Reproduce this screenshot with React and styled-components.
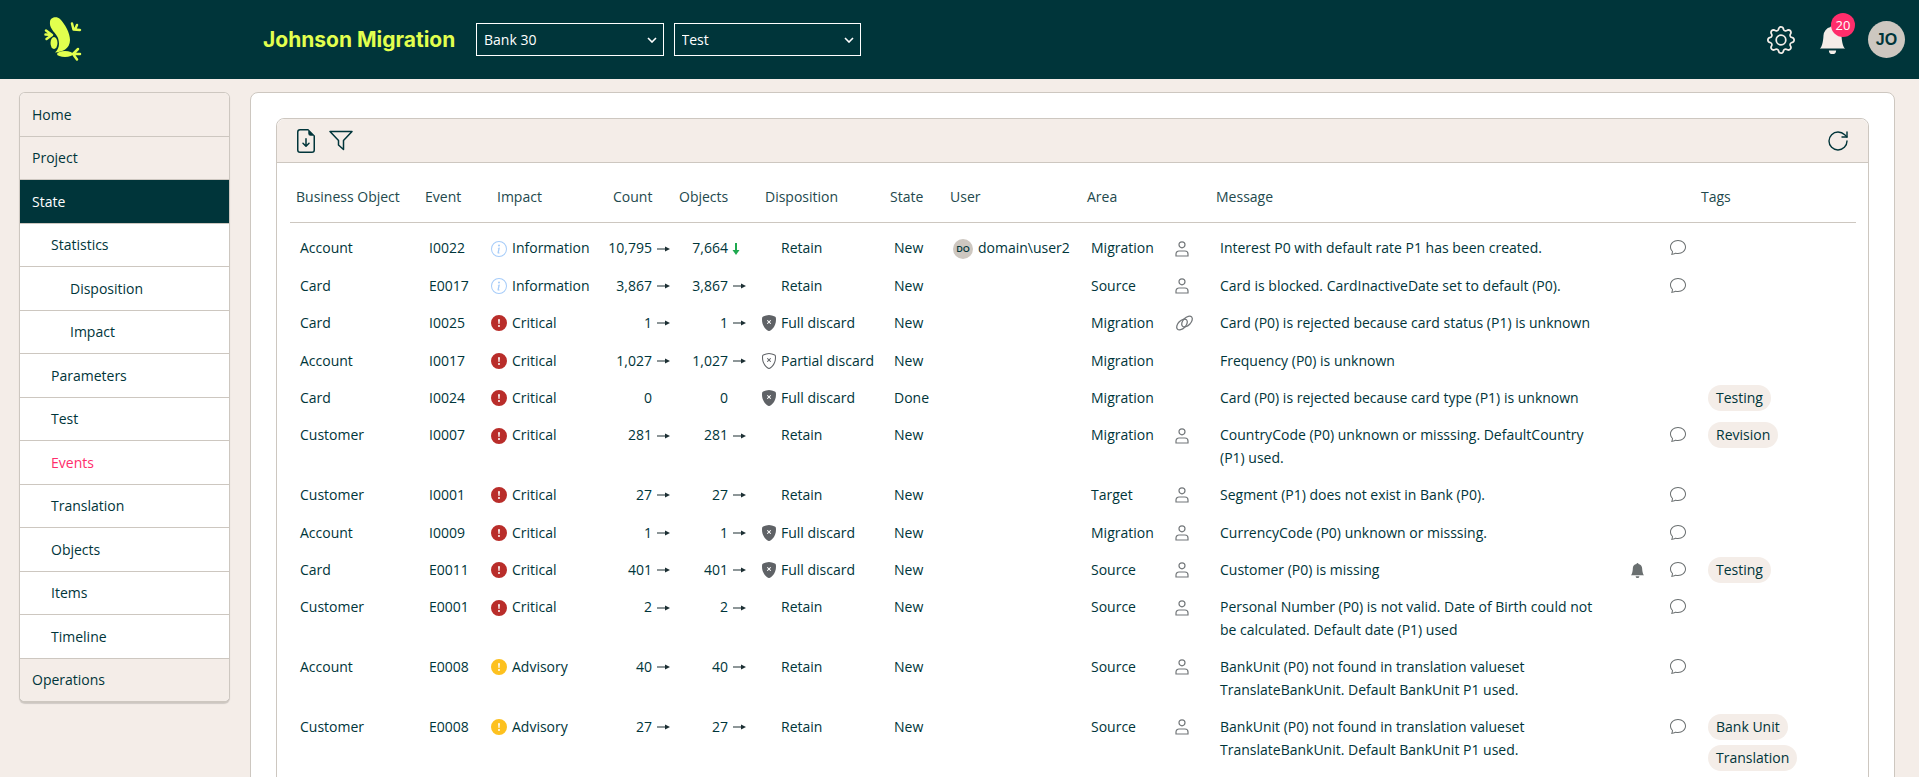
import React from "react";
import styled, { createGlobalStyle } from "styled-components";
import {
  BsGear, BsBellFill, BsFileEarmarkArrowDown, BsInfoCircle,
  BsExclamationCircleFill, BsShieldFillX, BsShieldX, BsChat,
} from "react-icons/bs";
import { RotateCw } from "lucide-react";

const dark = "#00353a";
const sand = "#f4ede8";
const line = "#cdc7c0";
const pink = "#ff2d6b";

const GlobalStyle = createGlobalStyle`
html, body { margin:0; padding:0; height:100%; overflow:hidden; background:${sand}; }
body { font-family:"Open Sans","Noto Sans","Liberation Sans",sans-serif; font-size:14px; color:${dark}; }
* { box-sizing:border-box; }
`;

const Page = styled.div`
height:100vh;
display:flex;
flex-direction:column;
overflow:hidden;
`;
const TopBar = styled.header`
flex:none;
height:79px;
background:${dark};
display:flex;
align-items:center;
padding:0 14px 0 44px;
`;
const LogoBox = styled.div`
width:219px;
display:flex;
`;
const AppTitle = styled.div`
width:213px;
font-family:Inter,sans-serif;
font-weight:700;
font-size:21px;
color:#e2ff4e;
`;
const PickerWrap = styled.div`
position:relative;
width:187.5px;
height:33px;
margin-right:10px;
& > svg {
  position:absolute;
  right:7px;
  top:14px;
  pointer-events:none;
}
`;
const Picker = styled.select`
appearance:none;
width:100%;
height:100%;
padding:0 20px 0 7px;
background:${dark};
color:#fff;
border:1px solid #fff;
border-radius:0;
font:inherit;
font-size:14px;
`;
const TopIcons = styled.div`
margin-left:auto;
display:flex;
align-items:center;
color:${sand};
`;
const GearBtn = styled.div`
display:flex;
font-size:28px;
margin-right:23px;
`;
const BellBtn = styled.div`
position:relative;
display:flex;
font-size:29px;
margin-right:21px;
`;
const Badge = styled.span`
position:absolute;
left:13px;
top:-12px;
width:24px;
height:24px;
border-radius:50%;
background:${pink};
color:#fff;
font-size:13px;
line-height:24px;
text-align:center;
`;
const Avatar = styled.div`
width:37px;
height:37px;
border-radius:50%;
background:${line};
color:${dark};
font-family:"Liberation Sans",sans-serif;
font-weight:700;
font-size:16px;
display:flex;
align-items:center;
justify-content:center;
`;
const Body = styled.div`
flex:1;
min-height:0;
display:flex;
align-items:flex-start;
gap:20px;
padding:13px 24px 0 19px;
`;
const SideNav = styled.nav`
flex:none;
width:211px;
border:1px solid ${line};
border-bottom-width:2px;
border-radius:6px;
overflow:hidden;
box-shadow:0 1px 1px rgba(0,0,0,.15);
background:#fff;
`;
const NavItem = styled.div`
height:43.5px;
display:flex;
align-items:center;
padding-left:${p => 12 + p.$level * 19}px;
background:${p => p.$active ? dark : p.$level === 0 ? sand : "#fff"};
color:${p => p.$active ? "#fff" : p.$current ? pink : dark};
border-bottom:1px solid ${line};
&:last-child { border-bottom:none; height:42.5px; }
`;
const MainCard = styled.main`
flex:1;
min-width:0;
height:800px;
background:#fff;
border:1px solid ${line};
border-radius:8px;
padding:25px 25px 0 25px;
`;
const ListCard = styled.section`
border:1px solid ${line};
border-radius:8px;
padding:0 12px 20px 13px;
`;
const Toolbar = styled.div`
height:44px;
margin:0 -12px 0 -13px;
padding:0 18px 0 17px;
background:${sand};
border-bottom:1px solid ${line};
border-radius:8px 8px 0 0;
display:flex;
align-items:center;
gap:11px;
font-size:24px;
color:${dark};
& > svg:last-child { margin-left:auto; }
`;
const Table = styled.table`
width:1566px;
table-layout:fixed;
border-collapse:collapse;
line-height:22.4px;
`;
const Th = styled.th`
padding:23px 6px 14px;
text-align:left;
font-weight:400;
color:#23494d;
border-bottom:1px solid ${line};
`;
const Row = styled.tr`
&:first-child td { padding-top:14px; }
`;
const Td = styled.td`
padding:7.5px 10px;
vertical-align:top;
`;
const FlushTd = styled(Td)`
padding-left:0;
padding-right:0;
`;
const MessageTd = styled(Td)`
padding-right:22px;
`;
const IconText = styled.div`
display:flex;
align-items:center;
gap:5px;
height:22.4px;
white-space:nowrap;
`;
const ImpactMark = styled.span`
display:flex;
font-size:16px;
color:${p => p.$color};
`;
const CountCell = styled.div`
display:flex;
justify-content:flex-end;
align-items:center;
height:22.4px;
padding-right:${p => p.$right}px;
`;
const ArrowSlot = styled.span`
width:18px;
display:flex;
justify-content:${p => p.$down ? "flex-start" : "flex-end"};
padding-left:${p => p.$down ? 4 : 0}px;
`;
const DispCell = styled.div`
display:flex;
align-items:center;
white-space:nowrap;
height:22.4px;
padding-left:2px;
`;
const ShieldSlot = styled.span`
width:20px;
display:flex;
font-size:16px;
color:#5f6266;
`;
const UserCell = styled.div`
display:flex;
align-items:center;
gap:5px;
white-space:nowrap;
margin-left:-1px;
height:22.4px;
`;
const UserDot = styled.span`
width:20px;
height:20px;
border-radius:50%;
background:${line};
color:${dark};
font-size:9px;
font-weight:600;
line-height:20px;
text-align:center;
`;
const GreyIcon = styled.span`
display:flex;
align-items:center;
height:${p => p.$tall || 22.4}px;
padding-left:${p => p.$left || 0}px;
font-size:${p => p.$size || 16}px;
color:#6a6f70;
`;
const Tag = styled.span`
display:block;
width:fit-content;
height:26px;
line-height:26px;
padding:0 8px;
margin:0 0 5px 3px;
border-radius:13px;
background:${sand};
white-space:nowrap;
`;
const TagList = styled.div`
margin-top:-2px;
margin-bottom:-7px;
`;

const navItems = [
  ["Home", 0], ["Project", 0], ["State", 0, "active"], ["Statistics", 1], ["Disposition", 2], ["Impact", 2],
  ["Parameters", 1], ["Test", 1], ["Events", 1, "current"], ["Translation", 1], ["Objects", 1], ["Items", 1],
  ["Timeline", 1], ["Operations", 0],
];

const columns = [129, 72, 116, 66, 86, 125, 60, 137, 89, 40, 420, 40, 25, 161];

const impacts = {
  Information: { Icon: BsInfoCircle, color: "#a6ccf9" },
  Critical: { Icon: BsExclamationCircleFill, color: "#b92d2a" },
  Advisory: { Icon: BsExclamationCircleFill, color: "#fdc11f" },
};

const rows = [
  { obj: "Account", ev: "I0022", imp: "Information", count: "10,795", objects: "7,664", down: true, disp: "Retain", state: "New", user: "domain\\user2", area: "Migration", who: "person", msg: "Interest P0 with default rate P1 has been created.", chat: true },
  { obj: "Card", ev: "E0017", imp: "Information", count: "3,867", objects: "3,867", disp: "Retain", state: "New", area: "Source", who: "person", msg: "Card is blocked. CardInactiveDate set to default (P0).", chat: true },
  { obj: "Card", ev: "I0025", imp: "Critical", count: "1", objects: "1", disp: "Full discard", shield: "full", state: "New", area: "Migration", who: "link", msg: "Card (P0) is rejected because card status (P1) is unknown" },
  { obj: "Account", ev: "I0017", imp: "Critical", count: "1,027", objects: "1,027", disp: "Partial discard", shield: "partial", state: "New", area: "Migration", msg: "Frequency (P0) is unknown" },
  { obj: "Card", ev: "I0024", imp: "Critical", count: "0", objects: "0", noArrow: true, disp: "Full discard", shield: "full", state: "Done", area: "Migration", msg: "Card (P0) is rejected because card type (P1) is unknown", tags: ["Testing"] },
  { obj: "Customer", ev: "I0007", imp: "Critical", count: "281", objects: "281", disp: "Retain", state: "New", area: "Migration", who: "person", msg: "CountryCode (P0) unknown or misssing. DefaultCountry (P1) used.", chat: true, tags: ["Revision"] },
  { obj: "Customer", ev: "I0001", imp: "Critical", count: "27", objects: "27", disp: "Retain", state: "New", area: "Target", who: "person", msg: "Segment (P1) does not exist in Bank (P0).", chat: true },
  { obj: "Account", ev: "I0009", imp: "Critical", count: "1", objects: "1", disp: "Full discard", shield: "full", state: "New", area: "Migration", who: "person", msg: "CurrencyCode (P0) unknown or misssing.", chat: true },
  { obj: "Card", ev: "E0011", imp: "Critical", count: "401", objects: "401", disp: "Full discard", shield: "full", state: "New", area: "Source", who: "person", msg: "Customer (P0) is missing", bell: true, chat: true, tags: ["Testing"] },
  { obj: "Customer", ev: "E0001", imp: "Critical", count: "2", objects: "2", disp: "Retain", state: "New", area: "Source", who: "person", msg: "Personal Number (P0) is not valid. Date of Birth could not be calculated. Default date (P1) used", chat: true },
  { obj: "Account", ev: "E0008", imp: "Advisory", count: "40", objects: "40", disp: "Retain", state: "New", area: "Source", who: "person", msg: "BankUnit (P0) not found in translation valueset TranslateBankUnit. Default BankUnit P1 used.", chat: true },
  { obj: "Customer", ev: "E0008", imp: "Advisory", count: "27", objects: "27", disp: "Retain", state: "New", area: "Source", who: "person", msg: "BankUnit (P0) not found in translation valueset TranslateBankUnit. Default BankUnit P1 used.", chat: true, tags: ["Bank Unit", "Translation"] },
];

const Logo = () => (
  <svg width="38" height="45" viewBox="44 17 38 45" fill="#e2ff4e" stroke="#e2ff4e" strokeLinecap="round" strokeLinejoin="round">
    <path stroke="none" d="M50 22C50 17 57 16 60 19C65 24 70 33 70 40C70 49 62 52 55 52.500C59 49 60 44 58 38C56 33 49 29 50 22Z" />
    <ellipse stroke="none" cx="54" cy="43" rx="3.500" ry="6" />
    <ellipse stroke="none" cx="65" cy="54" rx="8" ry="3" />
    <path fill="none" strokeWidth="2.500" d="M72 23.500L73.500 29.500L80 30M77 25L75 29.500" />
    <path fill="none" strokeWidth="2.500" d="M46 30.500L52 35M45.500 34.500L52 35M46.500 39L52 35" />
    <path fill="none" strokeWidth="2.500" d="M73 54L78 49M73 54L80 54M73 54L77 59.500" />
  </svg>
);

const Chevron = () => (
  <svg width="10" height="6" viewBox="0 0 10 6" fill="none" stroke="#fff" strokeWidth="1.600">
    <path d="M1 1l4 4 4-4" />
  </svg>
);

const Funnel = () => (
  <svg width="24" height="21" viewBox="0 0 24 21" fill="none" stroke={dark} strokeWidth="1.500" strokeLinejoin="round">
    <path d="M1 1.500h22l-8.500 9v9l-5-4.500v-4.500z" />
  </svg>
);

const ArrowRight = () => (
  <svg width="13" height="6" viewBox="0 0 13 6" fill="#1c2f33">
    <rect x="0" y="2.500" width="9" height="1" />
    <path d="M8 0.500L13 3L8 5.500z" />
  </svg>
);

const ArrowDown = () => (
  <svg width="8" height="12" viewBox="0 0 8 12" fill="#1ea94f">
    <rect x="3" y="0" width="2" height="8" />
    <path d="M0.500 7H7.500L4 12z" />
  </svg>
);

const PersonIcon = () => (
  <svg width="14" height="16" viewBox="0 0 14 16" fill="none" stroke="#73777a" strokeWidth="1.200">
    <circle cx="7" cy="3.800" r="3" />
    <path d="M1 15h12v-2c0-2-1.500-3-3-3H4c-1.500 0-3 1-3 3z" />
  </svg>
);

const LinkIcon = () => (
  <svg width="19" height="16" viewBox="0 0 19 16" fill="none" stroke="#73777a" strokeWidth="1.300">
    <ellipse cx="7" cy="9.500" rx="6.500" ry="3.800" transform="rotate(-45 7 9.500)" />
    <ellipse cx="12" cy="6.500" rx="6.500" ry="3.800" transform="rotate(-45 12 6.500)" />
  </svg>
);

const App = () => {
  return (
    <Page>
      <GlobalStyle />
      <TopBar>
        <LogoBox><Logo /></LogoBox>
        <AppTitle>Johnson Migration</AppTitle>
        <PickerWrap>
          <Picker defaultValue="Bank 30"><option>Bank 30</option></Picker>
          <Chevron />
        </PickerWrap>
        <PickerWrap>
          <Picker defaultValue="Test"><option>Test</option></Picker>
          <Chevron />
        </PickerWrap>
        <TopIcons>
          <GearBtn><BsGear /></GearBtn>
          <BellBtn><BsBellFill /><Badge>20</Badge></BellBtn>
          <Avatar>JO</Avatar>
        </TopIcons>
      </TopBar>
      <Body>
        <SideNav>
          {navItems.map(([label, level, flag]) => (
            <NavItem key={label} $level={level} $active={flag === "active"} $current={flag === "current"}>{label}</NavItem>
          ))}
        </SideNav>
        <MainCard>
          <ListCard>
            <Toolbar>
              <BsFileEarmarkArrowDown />
              <Funnel />
              <RotateCw size={24} strokeWidth={1.400} />
            </Toolbar>
            <Table>
              <colgroup>
                {columns.map((w, i) => <col key={i} style={{ width: w }} />)}
              </colgroup>
              <thead>
                <tr>
                  <Th>Business Object</Th>
                  <Th>Event</Th>
                  <Th>Impact</Th>
                  <Th>Count</Th>
                  <Th>Objects</Th>
                  <Th>Disposition</Th>
                  <Th>State</Th>
                  <Th>User</Th>
                  <Th colSpan={2}>Area</Th>
                  <Th colSpan={3}>Message</Th>
                  <Th>Tags</Th>
                </tr>
              </thead>
              <tbody>
                {rows.map((r, i) => {
                  const { Icon, color } = impacts[r.imp];
                  return (
                    <Row key={i}>
                      <Td>{r.obj}</Td>
                      <Td>{r.ev}</Td>
                      <FlushTd>
                        <IconText><ImpactMark $color={color}><Icon /></ImpactMark>{r.imp}</IconText>
                      </FlushTd>
                      <FlushTd>
                        <CountCell $right={3}>{r.count}<ArrowSlot>{!r.noArrow && <ArrowRight />}</ArrowSlot></CountCell>
                      </FlushTd>
                      <FlushTd>
                        <CountCell $right={13}>
                          {r.objects}
                          <ArrowSlot $down={r.down}>
                            {r.noArrow ? null : r.down ? <ArrowDown /> : <ArrowRight />}
                          </ArrowSlot>
                        </CountCell>
                      </FlushTd>
                      <FlushTd>
                        <DispCell>
                          <ShieldSlot>{r.shield === "full" && <BsShieldFillX />}{r.shield === "partial" && <BsShieldX />}</ShieldSlot>
                          {r.disp}
                        </DispCell>
                      </FlushTd>
                      <Td>{r.state}</Td>
                      <Td>{r.user && <UserCell><UserDot>DO</UserDot>{r.user}</UserCell>}</Td>
                      <Td>{r.area}</Td>
                      <FlushTd>
                        {r.who === "person" && <GreyIcon $left={5}><PersonIcon /></GreyIcon>}
                        {r.who === "link" && <GreyIcon $left={5}><LinkIcon /></GreyIcon>}
                      </FlushTd>
                      <MessageTd>{r.msg}</MessageTd>
                      <FlushTd>{r.bell && <GreyIcon $size={15}><BsBellFill /></GreyIcon>}</FlushTd>
                      <FlushTd>{r.chat && <GreyIcon $size={16} $tall={20}><BsChat /></GreyIcon>}</FlushTd>
                      <Td>{r.tags && <TagList>{r.tags.map(t => <Tag key={t}>{t}</Tag>)}</TagList>}</Td>
                    </Row>
                  );
                })}
              </tbody>
            </Table>
          </ListCard>
        </MainCard>
      </Body>
    </Page>
  );
};

export default App;
